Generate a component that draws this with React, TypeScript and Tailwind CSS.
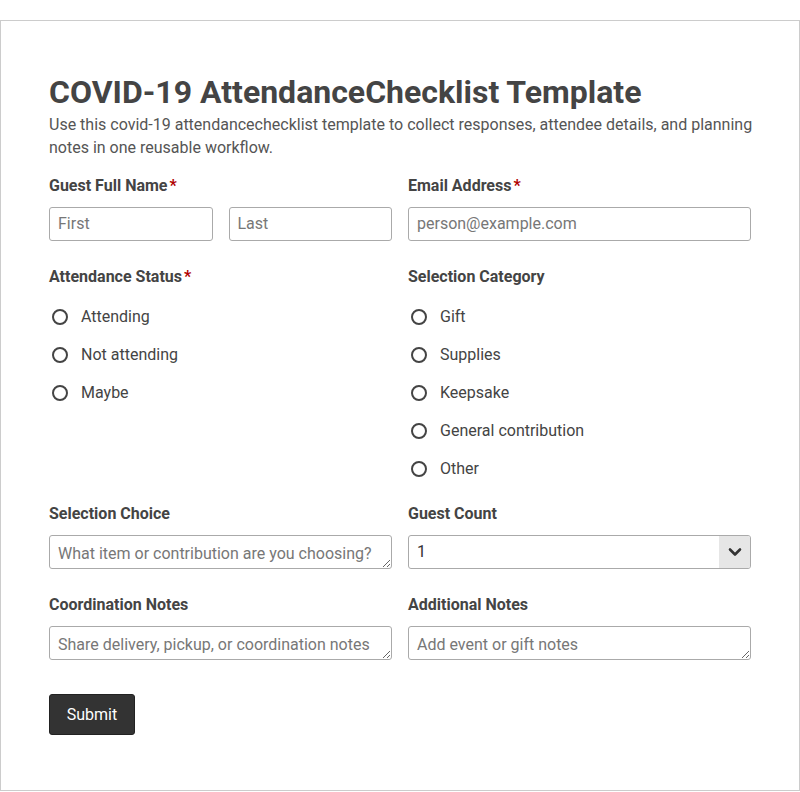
import React from "react";

const inputCls =
  "block w-full h-[34px] border border-[#aaaaaa] rounded-[3px] bg-white px-[8px] text-[16px] text-[#333] placeholder:text-[#777] outline-none";

function Label({ text, req }: { text: string; req?: boolean }) {
  return (
    <div className="text-[16px] leading-[24px] font-bold text-[#444] mb-[9px]">
      {text}
      {req && <span className="text-[#b00000] ml-[2px]">*</span>}
    </div>
  );
}

function Radio({ label }: { label: string }) {
  return (
    <label className="flex items-center h-[20px] text-[16px] text-[#444]">
      <span className="w-[16px] h-[16px] rounded-full border-2 border-[#444] ml-[3px] mr-[13px] bg-white" />
      {label}
    </label>
  );
}

export default function App() {
  return (
    <div className="pt-[20px] bg-white" style={{ fontFamily: "Roboto, 'Liberation Sans', sans-serif" }}>
      <div className="h-[771px] border border-[#cccccc] px-[48px] pt-[52px]">
        <h1 className="text-[32px] leading-[38px] font-bold text-[#444] mb-[2px]">
          COVID-19 AttendanceChecklist Template
        </h1>
        <p className="w-[712px] text-[16px] leading-[23px] text-[#555] mb-[15px]">
          Use this covid-19 attendancechecklist template to collect responses, attendee details, and planning notes in one reusable workflow.
        </p>
        <div className="grid grid-cols-2 gap-x-[16px] gap-y-[24px]">
          <div>
            <Label text="Guest Full Name" req />
            <div className="grid grid-cols-2 gap-x-[16px]">
              <input className={inputCls + " pb-[2px]"} placeholder="First" />
              <input className={inputCls + " pb-[2px]"} placeholder="Last" />
            </div>
          </div>
          <div>
            <Label text="Email Address" req />
            <input className={inputCls + " pb-[2px]"} placeholder="person@example.com" />
          </div>
          <div>
            <Label text="Attendance Status" req />
            <div className="flex flex-col gap-[18px] mt-[18px]">
              <Radio label="Attending" />
              <Radio label="Not attending" />
              <Radio label="Maybe" />
            </div>
          </div>
          <div>
            <Label text="Selection Category" />
            <div className="flex flex-col gap-[18px] mt-[18px] mb-[-1px]">
              <Radio label="Gift" />
              <Radio label="Supplies" />
              <Radio label="Keepsake" />
              <Radio label="General contribution" />
              <Radio label="Other" />
            </div>
          </div>
          <div>
            <Label text="Selection Choice" />
            <textarea
              rows={1}
              className={inputCls + " pt-[7px] pb-[3px] leading-[22px] resize-y"}
              placeholder="What item or contribution are you choosing?"
            />
          </div>
          <div>
            <Label text="Guest Count" />
            <div className="flex h-[34px] border border-[#aaaaaa] rounded-[3px] overflow-hidden bg-white">
              <div className="flex-1 flex items-center px-[8px] text-[16px] text-[#333]">1</div>
              <div className="w-[31px] bg-[#e6e6e6] flex items-center justify-center">
                <svg width="14" height="10" viewBox="0 0 14 10">
                  <path d="M2 2.5 L7 7.5 L12 2.5" fill="none" stroke="#333" strokeWidth="2.6" strokeLinecap="round" strokeLinejoin="round" />
                </svg>
              </div>
            </div>
          </div>
          <div>
            <Label text="Coordination Notes" />
            <textarea
              rows={1}
              className={inputCls + " pt-[7px] pb-[3px] leading-[22px] resize-y"}
              placeholder="Share delivery, pickup, or coordination notes"
            />
          </div>
          <div>
            <Label text="Additional Notes" />
            <textarea
              rows={1}
              className={inputCls + " pt-[7px] pb-[3px] leading-[22px] resize-y"}
              placeholder="Add event or gift notes"
            />
          </div>
        </div>
        <button className="mt-[34px] h-[41px] w-[86px] bg-[#333333] border border-[#222] rounded-[3px] text-white text-[16px]">
          Submit
        </button>
      </div>
    </div>
  );
}
